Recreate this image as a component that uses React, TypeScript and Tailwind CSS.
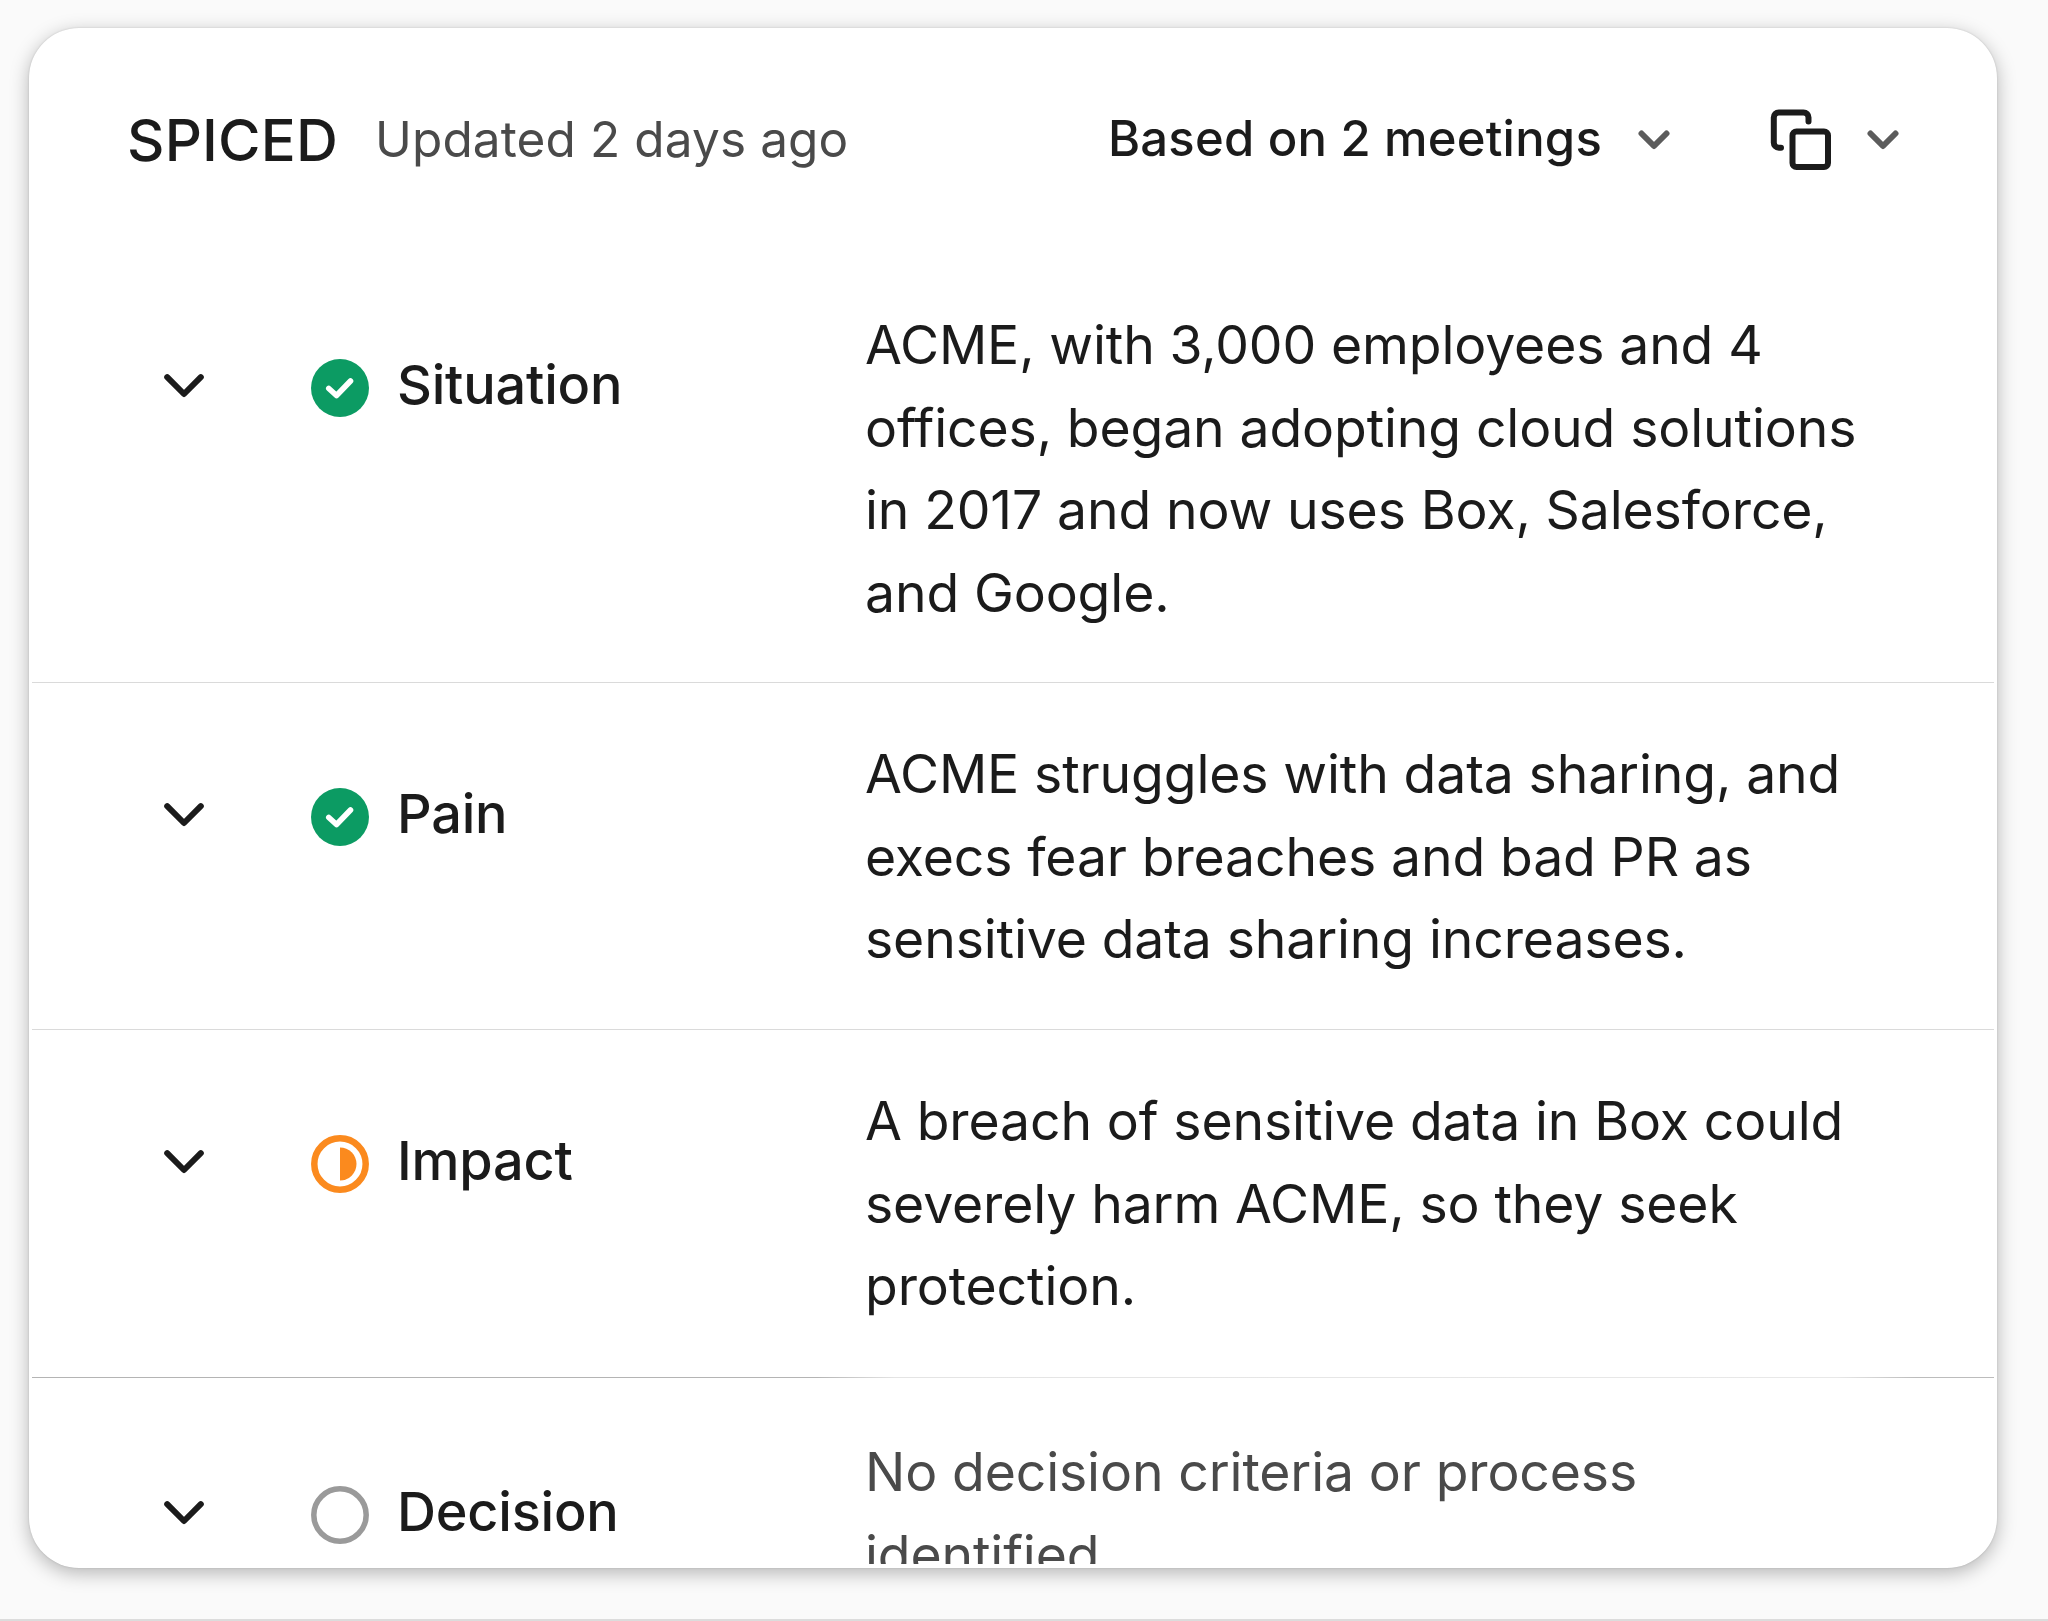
import type { ReactNode } from "react";

type Status = "done" | "partial" | "empty";

type Row = {
  label: string;
  status: Status;
  lines: string[];
  className: string;
  textClassName: string;
  dividerClassName?: string;
};

const rows: Row[] = [
  {
    label: "Situation",
    status: "done",
    lines: [
      "ACME, with 3,000 employees and 4",
      "offices, began adopting cloud solutions",
      "in 2017 and now uses Box, Salesforce,",
      "and Google.",
    ],
    className: "h-[430px] pt-[51px]",
    textClassName: "text-[#1b1b1b]",
    dividerClassName: "bg-[#dadada]",
  },
  {
    label: "Pain",
    status: "done",
    lines: [
      "ACME struggles with data sharing, and",
      "execs fear breaches and bad PR as",
      "sensitive data sharing increases.",
    ],
    className: "h-[346px] pt-[49px]",
    textClassName: "text-[#1b1b1b]",
    dividerClassName: "bg-[#dadada]",
  },
  {
    label: "Impact",
    status: "partial",
    lines: [
      "A breach of sensitive data in Box could",
      "severely harm ACME, so they seek",
      "protection.",
    ],
    className: "h-[347px] pt-[49px]",
    textClassName: "text-[#1b1b1b]",
    dividerClassName:
      "bg-[linear-gradient(90deg,#b4b4b4_40%,#e4e4e4_44%,#e8e8e8_92%,#bcbcbc_96%)]",
  },
  {
    label: "Decision",
    status: "empty",
    lines: ["No decision criteria or process", "identified"],
    className: "h-[186px] overflow-hidden pt-[52px]",
    textClassName: "text-[#4a4a4a]",
  },
];

function Chevron() {
  return (
    <svg
      viewBox="0 0 40 24"
      fill="none"
      stroke="currentColor"
      strokeWidth="6"
      strokeLinecap="round"
      strokeLinejoin="round"
      className="mt-[3px] h-[24px] w-[40px] shrink-0 text-[#1b1b1b]"
    >
      <path d="M3.2 3.2L20 20L36.8 3.2" />
    </svg>
  );
}

function MenuChevron() {
  return (
    <svg
      viewBox="0 0 32 20"
      fill="none"
      stroke="currentColor"
      strokeWidth="6"
      strokeLinecap="round"
      strokeLinejoin="round"
      className="mt-0.5 h-[20px] w-[32px] shrink-0 text-[#5c5c5c]"
    >
      <path d="M3.5 3.5L16 16L28.5 3.5" />
    </svg>
  );
}

function CopyIcon() {
  return (
    <svg
      viewBox="0 0 62 62"
      fill="none"
      stroke="currentColor"
      strokeWidth="6"
      strokeLinecap="round"
      strokeLinejoin="round"
      className="mt-0.5 size-[62px] shrink-0 text-[#1b1b1b]"
    >
      <rect x="22.5" y="22.5" width="35.5" height="35.5" rx="4" />
      <path d="M11 38.7H8.8a5 5 0 0 1-5-5V8.5a5 5 0 0 1 5-5H33.5a5 5 0 0 1 5 5V12.5" />
    </svg>
  );
}

const statusIcons: Record<Status, ReactNode> = {
  done: (
    <>
      <circle cx="29" cy="29" r="29" fill="#0c9b63" />
      <path
        d="M17.8 29.5L25.500 36.5L39.5 22"
        fill="none"
        stroke="#fff"
        strokeWidth="5.6"
        strokeLinecap="round"
        strokeLinejoin="round"
      />
    </>
  ),
  partial: (
    <>
      <circle cx="29" cy="29" r="25.7" fill="none" stroke="#fb8a1e" strokeWidth="6.5" />
      <path d="M29 12.5a16.5 16.5 0 0 1 0 33z" fill="#fb8a1e" />
    </>
  ),
  empty: <circle cx="29" cy="29" r="26.2" fill="none" stroke="#9a9a9a" strokeWidth="5.5" />,
};

function StatusIcon({ status }: { status: Status }) {
  return (
    <svg viewBox="0 0 58 58" className="mt-1.5 size-[58px] shrink-0">
      {statusIcons[status]}
    </svg>
  );
}

function Header() {
  return (
    <header className="flex h-[224px] shrink-0 items-start pr-[98px] pl-[98px] pt-[71px]">
      <div className="flex h-20 flex-1 items-center whitespace-nowrap">
        <h1 className="w-[248px] pt-0.5 text-[58px] font-medium tracking-[0.2px] text-[#1b1b1b]">
          SPICED
        </h1>
        <span className="text-[49.5px] tracking-[0.12px] text-[#4a4a4a]">
          Updated 2 days ago
        </span>
      </div>
      <div className="flex h-20 items-center whitespace-nowrap">
        <span className="text-[49px] font-medium tracking-[0.2px] text-[#1b1b1b]">
          Based on 2 meetings
        </span>
        <div className="ml-[36px]">
          <MenuChevron />
        </div>
        <div className="ml-[100px] flex items-center gap-[35px]">
          <CopyIcon />
          <MenuChevron />
        </div>
      </div>
    </header>
  );
}

export default function App() {
  return (
    <div className="flex h-[1621px] w-[2048px] items-start border-b-2 border-[#dcdcdc] bg-[#fafafa] pt-7 pl-[29px] font-[Inter,sans-serif]">
      <main className="flex h-[1540px] w-[1968px] flex-col overflow-hidden rounded-[50px] bg-white shadow-[0_0_2px_rgba(0,0,0,0.16),0_5px_19px_rgba(0,0,0,0.28)]">
        <Header />
        {rows.map((row) => (
          <section key={row.label} className="shrink-0 px-[3px]">
            <div className={`flex items-start ${row.className}`}>
              <div className="mt-10 flex h-[83px] w-[833px] shrink-0 items-center pl-[132px]">
                <Chevron />
                <div className="ml-[107px] flex items-center gap-7">
                  <StatusIcon status={row.status} />
                  <h2 className="text-[54px] font-medium tracking-[-0.2px] text-[#1b1b1b]">
                    {row.label}
                  </h2>
                </div>
              </div>
              <p
                className={`mt-px text-[53.5px] leading-[82.7px] tracking-[-0.13px] whitespace-nowrap ${row.textClassName}`}
              >
                {row.lines.map((line) => (
                  <span key={line} className="block">
                    {line}
                  </span>
                ))}
              </p>
            </div>
            {row.dividerClassName && (
              <div className={`h-px ${row.dividerClassName}`} />
            )}
          </section>
        ))}
      </main>
    </div>
  );
}
